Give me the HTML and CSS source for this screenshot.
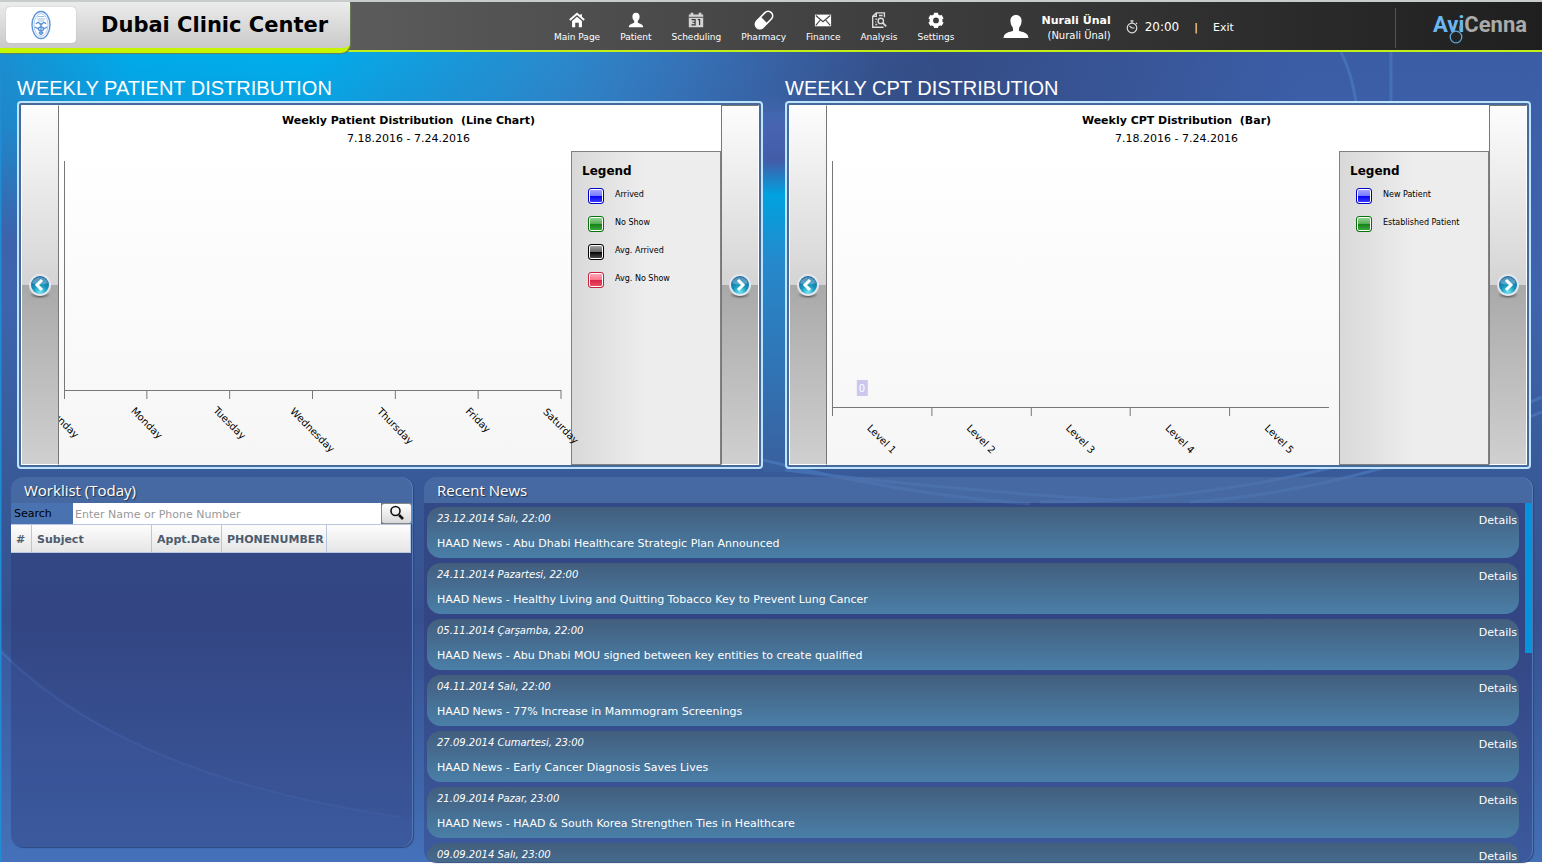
FILE: index.html
```html
<!DOCTYPE html>
<html lang="en">
<head>
<meta charset="utf-8">
<title>Dubai Clinic Center</title>
<link rel="stylesheet" href="styles.css">
</head>
<body>
<svg class="backdrop" viewBox="0 0 1542 810" preserveAspectRatio="none" aria-hidden="true">
  <defs>
    <linearGradient id="base" x1="0" y1="0" x2="0" y2="1">
      <stop offset="0" stop-color="#3b5da6"/><stop offset=".3" stop-color="#3e64ad"/><stop offset=".52" stop-color="#385a98"/><stop offset=".7" stop-color="#36508f"/><stop offset="1" stop-color="#4370b6"/>
    </linearGradient>
    <linearGradient id="sky" x1="0" y1="0" x2="1" y2="0">
      <stop offset="0" stop-color="#1a8fd0"/><stop offset=".14" stop-color="#00abea"/><stop offset=".32" stop-color="#00aeec"/><stop offset=".6" stop-color="#2c88cb"/><stop offset="1" stop-color="#4568b3" stop-opacity="0"/>
    </linearGradient>
    <linearGradient id="fade" x1="0" y1="0" x2="0" y2="1">
      <stop offset="0" stop-color="#fff"/><stop offset=".4" stop-color="#ccc"/><stop offset="1" stop-color="#000"/>
    </linearGradient>
    <mask id="skymask"><rect width="950" height="190" fill="url(#fade)"/></mask>
    <linearGradient id="night" x1="0" y1="0" x2="1" y2="0">
      <stop offset="0" stop-color="#34477f" stop-opacity="0"/><stop offset=".4" stop-color="#334b82"/><stop offset="1" stop-color="#34477f" stop-opacity="0"/>
    </linearGradient>
    <linearGradient id="beam" x1="0" y1="0" x2="0" y2="1">
      <stop offset="0" stop-color="#4867b4" stop-opacity="0"/><stop offset=".1" stop-color="#4867b4" stop-opacity="0"/><stop offset=".18" stop-color="#4864b0"/><stop offset=".26" stop-color="#425ca8"/><stop offset=".34" stop-color="#00a2e0"/><stop offset=".5" stop-color="#2689cc"/><stop offset="1" stop-color="#3a5f9e"/>
    </linearGradient>
    <linearGradient id="low" x1="0" y1="0" x2="0" y2="1">
      <stop offset="0" stop-color="#3c5ea6"/><stop offset="1" stop-color="#4472bc"/>
    </linearGradient>
  </defs>
  <rect width="1542" height="810" fill="url(#base)"/>
  <rect x="600" width="700" height="60" fill="url(#night)"/>
  <rect width="950" height="190" fill="url(#sky)" mask="url(#skymask)"/>
  <path d="M763 0H785V420H763Z" fill="url(#beam)"/>
  <path d="M0 595Q130 730 430 770L600 810H0Z" fill="url(#low)" opacity=".6"/>
  <path d="M0 599Q125 725 400 765" fill="none" stroke="#4e79c2" stroke-width="2" opacity=".5"/>
  <path d="M763 408Q900 442 1030 452M785 418Q930 436 1110 448M1040 450Q1300 450 1542 345M1190 450Q1350 440 1542 360M1341 0Q1352 22 1356 50M1391 0V50" fill="none" stroke="#5083c8" stroke-width="3" opacity=".5"/>
  <path d="M0 0V810" stroke="#1f8cd4" stroke-width="3"/>
</svg>

<header class="topbar">
  <div class="clinic">
    <div class="clinic-logo">
      <svg width="20" height="30" viewBox="0 0 20 30" fill="none" stroke="#5b93d8">
        <ellipse cx="10" cy="15" rx="9" ry="13.5" stroke-width="1.4"/><ellipse cx="10" cy="15" rx="7" ry="11.5" stroke-width=".5"/>
        <path d="M6.500 6.500h7M6 9h8M7 11h6" stroke-width="1.200" opacity=".6"/>
        <path d="M5 14q2-3 4 0l1 1 1-1q2-3 4 0M4 17q3 3 6-1 3 4 6 1M7 19q3 4 6 0M8 23q2-3 4 0-2 3-4 0M10 13v11" stroke-width="1.300"/>
      </svg>
    </div>
    <h1>Dubai Clinic Center</h1>
  </div>
  <nav class="menu">
    <a href="#"><svg viewBox="0 0 20 20"><path d="M2 10 10 3l8 7M14.500 3.500v4" fill="none" stroke="#fff" stroke-width="2"/><path d="M4.500 11 10 6.300l5.500 4.700v7H12v-5H8v5H4.500z"/></svg>Main Page</a>
    <a href="#"><svg viewBox="0 0 20 20"><path d="M10 2c3 0 4 2 4 4.500S13 10 12 11v2c2 1 6 1.500 6 5H2c0-3.500 4-4 6-5v-2C7 10 6 9 6 6.500S7 2 10 2z"/></svg>Patient</a>
    <a href="#"><svg viewBox="0 0 20 20"><path d="M2 4h2V2h3v2h6V2h3v2h2v14H2z" fill="#d4d4d4"/><path d="M2 7h16" stroke="#444"/><path d="M5 9.500h4v6H5M6 12.500h3M12 9.500h2v6" fill="none" stroke="#333" stroke-width="1.300"/></svg>Scheduling</a>
    <a href="#"><svg viewBox="0 0 20 20"><g transform="rotate(45 10 10)"><rect x="5" y="-1.500" width="10" height="23" rx="5" fill="none" stroke="#fff" stroke-width="1.800"/><path d="M5 10h10v6.500a5 5 0 0 1-10 0z"/></g></svg>Pharmacy</a>
    <a href="#"><svg viewBox="0 0 20 20"><path d="M1 4h18v13H1z"/><path d="m2 5 8 7 8-7M2 16l5-6M18 16l-5-6" fill="none" stroke="#444" stroke-width="1.300"/></svg>Finance</a>
    <a href="#"><svg viewBox="0 0 20 20"><g fill="none" stroke="#ddd" stroke-width="1.500"><path d="M16 7V2H7L3 6v12h12M7 2v4H3M10 5h4M6 9h2M6 12h1M6 15h2"/><circle cx="12" cy="11" r="3"/><path d="m14 13 4 4" stroke-width="2"/></g></svg>Analysis</a>
    <a href="#"><svg viewBox="0 0 20 20"><circle cx="10" cy="10.500" r="5.200" fill="none" stroke="#fff" stroke-width="4"/><g stroke="#fff" stroke-width="4.500"><path d="M10 2v3M10 16v3"/><path d="M10 2v3M10 16v3" transform="rotate(60 10 10.500)"/><path d="M10 2v3M10 16v3" transform="rotate(120 10 10.500)"/></g></svg>Settings</a>
  </nav>
  <div class="user">
    <svg width="26" height="24" viewBox="0 0 26 24" fill="#fff"><path d="M13 0c4 0 6 3 5.500 7-.3 3-1.500 4.500-2.500 6v3c3 1 9 1 9.500 7H.5c.5-6 6.500-6 9.500-7v-3C9 11.500 7.800 10 7.500 7 7 3 9 0 13 0z"/></svg>
    <div class="names"><strong>Nurali Ünal</strong><span>(Nurali Ünal)</span></div>
    <div class="clock"><svg width="12" height="14" viewBox="0 0 12 14" fill="none" stroke="#ddd" stroke-width="1.200"><circle cx="6" cy="8" r="4.800"/><path d="M4.500.8h3M6 1v2M10 3l1 1M6 8h2.500M6 8 3.500 6"/></svg>20:00</div>
    <span class="bar">|</span>
    <a href="#">Exit</a>
  </div>
  <div class="brand"><span class="avi">Avi</span><span>Cenna</span>
    <svg width="14" height="18" viewBox="0 0 14 18" fill="none" stroke="#5da9dd" stroke-width="1.300"><path d="M3 0v5M11 0v5"/><circle cx="7" cy="11" r="5.800"/></svg>
  </div>
</header>

<main>
  <div class="charts">
    <section>
      <h2>WEEKLY PATIENT DISTRIBUTION</h2>
      <div class="card">
        <button class="pager" aria-label="Previous chart"><svg width="24" height="28" viewBox="0 0 24 28"><use href="#orb"/><path d="m14 9-5 5 5 5" class="chev"/></svg></button>
        <div class="chart">
          <div class="caption"><h3>Weekly Patient Distribution  (Line Chart)</h3><p>7.18.2016 - 7.24.2016</p></div>
          <svg class="plot">
            <path d="M.5 10V248" class="axis"/><line x1="0" x2="100%" y1="239.500" y2="239.500" class="axis"/>
            <svg x="0"><text transform="translate(0 272) rotate(45)">Sunday</text></svg>
            <svg x="16.667%"><path d="M0 239v9" class="axis"/><text transform="translate(0 272) rotate(45)">Monday</text></svg>
            <svg x="33.333%"><path d="M0 239v9" class="axis"/><text transform="translate(0 272) rotate(45)">Tuesday</text></svg>
            <svg x="50%"><path d="M0 239v9" class="axis"/><text transform="translate(0 279) rotate(45)">Wednesday</text></svg>
            <svg x="66.667%"><path d="M0 239v9" class="axis"/><text transform="translate(0 275) rotate(45)">Thursday</text></svg>
            <svg x="83.333%"><path d="M0 239v9" class="axis"/><text transform="translate(0 269) rotate(45)">Friday</text></svg>
            <svg x="100%"><path d="M0 239v9" class="axis"/><text transform="translate(0 275) rotate(45)">Saturday</text></svg>
          </svg>
          <div class="legend">
            <h4>Legend</h4>
            <ul>
              <li><i class="swatch blue"></i>Arrived</li>
              <li><i class="swatch green"></i>No Show</li>
              <li><i class="swatch black"></i>Avg. Arrived</li>
              <li><i class="swatch red"></i>Avg. No Show</li>
            </ul>
          </div>
        </div>
        <button class="pager next" aria-label="Next chart"><svg width="24" height="28" viewBox="0 0 24 28"><use href="#orb"/><path d="m10 9 5 5-5 5" class="chev"/></svg></button>
      </div>
    </section>
    <section>
      <h2>WEEKLY CPT DISTRIBUTION</h2>
      <div class="card">
        <button class="pager" aria-label="Previous chart"><svg width="24" height="28" viewBox="0 0 24 28"><use href="#orb"/><path d="m14 9-5 5 5 5" class="chev"/></svg></button>
        <div class="chart">
          <div class="caption"><h3>Weekly CPT Distribution  (Bar)</h3><p>7.18.2016 - 7.24.2016</p></div>
          <svg class="plot">
            <path d="M.5 10V265" class="axis"/><line x1="0" x2="100%" y1="256.500" y2="256.500" class="axis"/>
            <svg x="6%"><rect x="-5" y="229" width="11" height="16" fill="#cbc8f0"/><text y="237" class="value">0</text></svg>
            <svg x="10%"><text transform="translate(0 288) rotate(45)">Level 1</text></svg>
            <svg x="20%"><path d="M.5 256v9" class="axis"/></svg>
            <svg x="30%"><text transform="translate(0 288) rotate(45)">Level 2</text></svg>
            <svg x="40%"><path d="M.5 256v9" class="axis"/></svg>
            <svg x="50%"><text transform="translate(0 288) rotate(45)">Level 3</text></svg>
            <svg x="60%"><path d="M0 256v9" class="axis"/></svg>
            <svg x="70%"><text transform="translate(0 288) rotate(45)">Level 4</text></svg>
            <svg x="80%"><path d="M0 256v9" class="axis"/></svg>
            <svg x="90%"><text transform="translate(0 288) rotate(45)">Level 5</text></svg>
          </svg>
          <div class="legend">
            <h4>Legend</h4>
            <ul>
              <li><i class="swatch blue"></i>New Patient</li>
              <li><i class="swatch green"></i>Established Patient</li>
            </ul>
          </div>
        </div>
        <button class="pager next" aria-label="Next chart"><svg width="24" height="28" viewBox="0 0 24 28"><use href="#orb"/><path d="m10 9 5 5-5 5" class="chev"/></svg></button>
      </div>
    </section>
  </div>

  <div class="panels">
    <section class="panel worklist">
      <h2>Worklist (Today)</h2>
      <form class="search">
        <label for="q">Search</label>
        <input id="q" type="text" placeholder="Enter Name or Phone Number">
        <button type="button" aria-label="Search"><svg width="16" height="16" viewBox="0 0 16 16" fill="none" stroke="#111"><circle cx="6.500" cy="6" r="4.500" stroke-width="1.600"/><path d="m10 10 4 4" stroke-width="2.600"/></svg></button>
      </form>
      <table>
        <thead><tr><th class="c-num">#</th><th class="c-subject">Subject</th><th class="c-date">Appt.Date</th><th class="c-phone">PHONENUMBER</th><th></th></tr></thead>
      </table>
    </section>
    <section class="panel news">
      <h2>Recent News</h2>
      <div class="feed">
        <article><div><time>23.12.2014 Salı, 22:00</time><p>HAAD News - Abu Dhabi Healthcare Strategic Plan Announced</p></div><a href="#">Details</a></article>
        <article><div><time>24.11.2014 Pazartesi, 22:00</time><p>HAAD News - Healthy Living and Quitting Tobacco Key to Prevent Lung Cancer</p></div><a href="#">Details</a></article>
        <article><div><time>05.11.2014 Çarşamba, 22:00</time><p>HAAD News - Abu Dhabi MOU signed between key entities to create qualified</p></div><a href="#">Details</a></article>
        <article><div><time>04.11.2014 Salı, 22:00</time><p>HAAD News - 77% Increase in Mammogram Screenings</p></div><a href="#">Details</a></article>
        <article><div><time>27.09.2014 Cumartesi, 23:00</time><p>HAAD News - Early Cancer Diagnosis Saves Lives</p></div><a href="#">Details</a></article>
        <article><div><time>21.09.2014 Pazar, 23:00</time><p>HAAD News - HAAD &amp; South Korea Strengthen Ties in Healthcare</p></div><a href="#">Details</a></article>
        <article><div><time>09.09.2014 Salı, 23:00</time></div><a href="#">Details</a></article>
        <div class="thumb"></div>
      </div>
    </section>
  </div>
</main>

<svg class="defs" aria-hidden="true">
  <defs>
    <radialGradient id="glass" cx=".5" cy=".9" r=".9"><stop offset="0" stop-color="#6fe6f5"/><stop offset=".45" stop-color="#1497bd"/><stop offset="1" stop-color="#1b5f97"/></radialGradient>
    <radialGradient id="shade"><stop offset=".3" stop-color="#444" stop-opacity=".8"/><stop offset="1" stop-color="#777" stop-opacity="0"/></radialGradient>
    <g id="orb"><ellipse cx="12" cy="24" rx="11" ry="4" fill="url(#shade)"/><circle cx="12" cy="14" r="11" fill="#e3e7ee"/><circle cx="12" cy="14" r="9" fill="url(#glass)"/><path d="M4 12a8.500 8.500 0 0 1 16 0q-8 3-16 0z" fill="#fff" opacity=".28"/></g>
  </defs>
</svg>
</body>
</html>
```

FILE: styles.css
```css
* { box-sizing: border-box; }
h1, h2, h3, h4, p, ul { margin: 0; padding: 0; }
ul { list-style: none; }
a { color: inherit; text-decoration: none; }

body {
  margin: 0;
  height: 100vh;
  padding-bottom: 3px;
  display: flex;
  flex-direction: column;
  overflow: hidden;
  background: #fff;
  font-family: "DejaVu Sans", Verdana, sans-serif;
  font-size: 11px;
}

.defs { position: absolute; width: 0; height: 0; }
.backdrop {
  position: absolute;
  top: 52px;
  left: 0;
  z-index: -1;
  width: 100%;
  height: calc(100% - 55px);
}

/* Top bar */
.topbar {
  display: flex;
  flex: none;
  height: 52px;
  border-top: 2px solid #c9cccd;
  border-bottom: 2px solid #c3ee16;
  background: linear-gradient(90deg, #5b5b5b 23%, #404040 55%, #1f1f1f);
  color: #fff;
}
.clinic {
  display: flex;
  align-items: center;
  flex: none;
  width: 350px;
  height: 51px;
  padding-left: 6px;
  border-bottom: 5px solid #c6f500;
  border-radius: 0 0 9px 0;
  background: linear-gradient(#ececec, #c9c9c9);
  box-shadow: 1px 1px 1px #6b7d58;
  color: #000;
}
.clinic h1 { margin-left: 25px; font-size: 21px; line-height: 28px; }
.clinic-logo {
  display: flex;
  align-items: center;
  justify-content: center;
  width: 70px;
  height: 36px;
  border-radius: 4px;
  background: #fff;
  box-shadow: 0 0 1px #999;
}
.menu { display: flex; gap: 20px; margin-left: 204px; padding-top: 9px; font-size: 9px; line-height: 16px; white-space: nowrap; }
.menu a { display: flex; flex-direction: column; align-items: center; }
.menu svg { width: 18px; height: 18px; fill: #fff; overflow: visible; }
.user { display: flex; align-items: center; margin-left: 49px; padding-top: 2px; white-space: nowrap; }
.names { display: flex; flex-direction: column; align-items: flex-end; margin: 1px 15px 0 12px; font-size: 10px; line-height: 15px; }
.names strong { font-size: 11px; }
.clock { display: flex; align-items: center; gap: 7px; font-size: 12px; }
.bar { margin: 0 15px; }
.brand {
  position: relative;
  display: flex;
  margin: 6px 15px 2px auto;
  padding: 0 0 0 37px;
  border-left: 1px solid #555;
  color: #aaa;
  font: bold 22px/34px Roboto, "Liberation Sans", sans-serif;
}
.brand .avi { color: #6bb8f2; }
.brand svg { position: absolute; left: 53px; top: 18px; }

/* Charts */
main { display: flex; flex: 1; flex-direction: column; gap: 8px; min-height: 0; }
.charts { display: grid; grid-template-columns: 1fr 1fr; gap: 22px; padding: 24px 11px 0 17px; }
.charts h2 { color: #fff; font: 20px/25px "Liberation Sans", Arial, sans-serif; }
.card {
  display: flex;
  padding: 2px;
  border: 2px solid #bee4fb;
  border-radius: 4px;
  background: #466a9c;
}
.pager {
  display: flex;
  align-items: center;
  justify-content: center;
  flex: none;
  width: 38px;
  padding: 0;
  border: 1px solid #fff;
  border-right-color: #777;
  background: linear-gradient(#fdfdfd, #d4d4d4 50%, #a9a9a9 50%, #d0d0d0);
}
.pager.next { border-color: #777 #fff #fff #777; }
.chev { fill: none; stroke: #fff; stroke-width: 3; }
.chart {
  display: grid;
  grid-template-columns: 1fr 150px;
  flex: 1;
  min-width: 0;
  background: linear-gradient(#fff 12%, #f6f6f6);
}
.caption { grid-column: 1 / 3; padding: 7px 0 3px 37px; text-align: center; line-height: 18px; white-space: pre; }
.caption h3 { font-size: 11px; }
.plot {
  position: relative;
  z-index: 1;
  width: calc(100% - 15px);
  height: 314px;
  margin-left: 5px;
  overflow: visible;
  clip-path: inset(0 -40px 0 -5px);
}
.plot svg { overflow: visible; }
.plot text { font-size: 10px; text-anchor: middle; dominant-baseline: central; }
.plot .value { fill: #fff; }
.axis { fill: none; stroke: #777; }
.legend { padding: 10px; border: 1px solid #808080; background: linear-gradient(90deg, #d9d9d9, #ededed 50%); }
.legend h4 { font-size: 12px; line-height: 18px; }
.legend li { display: flex; align-items: flex-start; gap: 11px; height: 28px; padding: 8px 0 0 6px; font-size: 8px; line-height: 14px; }
.swatch { width: 16px; height: 16px; border: 1px solid; border-radius: 3px; box-shadow: inset 0 0 0 1px #fff; }
.blue { border-color: #00c; background: linear-gradient(#aaf, #77f 50%, #00e 50%, #44f); }
.green { border-color: #077407; background: linear-gradient(#9d9, #5a5 50%, #118011 50%, #4a4); }
.black { border-color: #000; background: linear-gradient(#aaa, #666 50%, #000 50%, #555); }
.red { border-color: #c8203f; background: linear-gradient(#fab, #f78 50%, #d8234a 50%, #e56); }

/* Lower panels */
.panels { display: flex; flex: 1; gap: 11px; min-height: 0; padding: 0 9px 0 11px; }
.panel {
  display: flex;
  flex-direction: column;
  border-radius: 12px;
  background: rgba(45, 50, 110, .35);
  box-shadow: 1px 1px 1px #2d477d, inset -1px 0 0 #5677b5;
  overflow: hidden;
}
.panel h2 {
  flex: none;
  padding: 1px 13px 0;
  background: rgba(90, 135, 190, .5);
  color: #fff;
  font: 15px/25px "Open Sans", "Noto Sans", sans-serif;
  text-shadow: 1px 1px 1px #234;
}
.worklist { flex: 0 0 402px; margin-bottom: 15px; }
.search { display: flex; align-items: stretch; height: 21px; padding-right: 1px; background: rgba(90, 150, 210, .55); }
.search label { width: 62px; padding-left: 3px; line-height: 21px; }
.search input {
  flex: 1;
  min-width: 0;
  padding: 1px 2px 0;
  border: 0;
  font: inherit;
}
.search input::placeholder { color: #999; }
.search button { display: flex; align-items: center; justify-content: center; width: 31px; padding: 0 0 2px; border: 1px solid #888; border-radius: 3px; background: linear-gradient(#fff, #d9d9d9); }
.worklist table { width: 400px; border-spacing: 0; table-layout: fixed; color: #4d5b6e; }
.worklist th {
  height: 29px;
  padding: 1px 5px 0;
  border: solid #b9c6dd;
  border-width: 1px 1px 1px 0;
  background: linear-gradient(#fdfdfd, #e6e6e6);
  text-align: left;
}
.c-num { width: 21px; }
.c-subject { width: 120px; }
.c-date { width: 70px; }
.c-phone { width: 105px; }
.news { flex: 1; border-bottom-right-radius: 12px; }
.feed { position: relative; display: flex; flex: 1; flex-direction: column; gap: 5px; min-height: 0; padding: 4px 14px 0 3px; overflow: hidden; }
.feed article {
  display: flex;
  justify-content: space-between;
  flex: none;
  height: 51px;
  padding: 4px 2px 0 10px;
  border-radius: 14px;
  background: linear-gradient(#435e7d, #4a7fa8);
  color: #fff;
}
.feed time { display: block; font-size: 10px; font-style: italic; line-height: 16px; }
.feed p { padding-top: 9px; line-height: 16px; }
.feed a { padding-top: 2px; line-height: 16px; }
.thumb { position: absolute; top: 0; right: 1px; width: 7px; height: 150px; background: #0594dc; }
```
